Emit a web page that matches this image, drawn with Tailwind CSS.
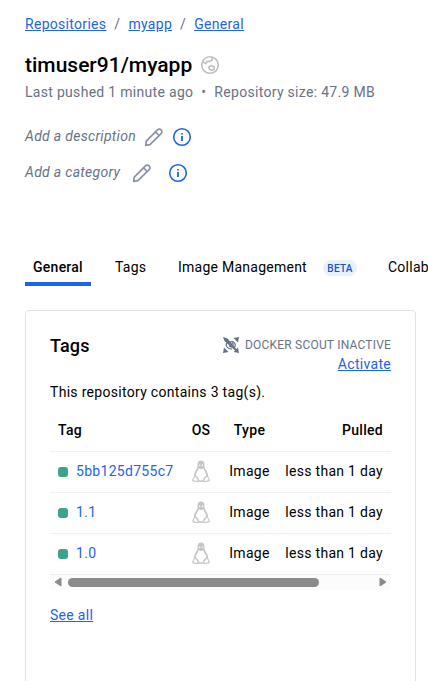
<!DOCTYPE html>
<html lang="en">
<head>
<meta charset="utf-8">
<title>timuser91/myapp</title>
<script src="https://cdn.jsdelivr.net/npm/@tailwindcss/browser@4"></script>
</head>
<body class="bg-white overflow-hidden h-[681px] font-[Roboto,sans-serif] text-[14px] leading-5 tracking-[0.3px] text-black">
<svg class="hidden">
  <symbol id="pencil" viewBox="0 0 20 20"><g fill="none" stroke="#8993a5" stroke-width="1.700" stroke-linejoin="round"><path d="M1.700 18.300l.6-4.200L13.400 2.900a2.650 2.650 0 0 1 3.750 3.750L5.900 17.700l-4.200.6z"/><path d="M11.500 4.800l3.700 3.700"/></g></symbol>
  <symbol id="info" viewBox="0 0 20 20"><circle cx="10" cy="10" r="8.300" fill="none" stroke="#1d63ed" stroke-width="1.600"/><path d="M9.100 5.900h1.800v1.700H9.100zM9.100 9h1.800v5H9.100z" fill="#1d63ed"/></symbol>
  <symbol id="tux" viewBox="0 0 18 23"><path d="M9 .5C6.700.5 5.500 2 5.600 4.200c.1 2.500-.2 3.800-1.700 6C2.500 12.200 1.900 14 2 16L.3 19.600c-.4 1.300.5 1.800 2 2 2 .2 3.200 1.300 4.300.2h4.800c1.100 1.100 2.300 0 4.300-.2 1.500-.2 2.400-.7 2-2L16 16c.1-2-.5-3.800-1.900-5.800-1.500-2.200-1.800-3.500-1.700-6C12.500 2 11.300.5 9 .5z" fill="#c6c6c6"/><path d="M6.800 8.200c-.6 2.200-3 4.300-3 7.600 1.800.8 3 2.500 3.200 4.400h4c.2-1.900 1.400-3.600 3.200-4.400 0-3.300-2.400-5.400-3-7.600L9 9.200z" fill="#fff"/><path d="M3 16.500l-1.700 3.300c.3 1 3 .8 4.100 1.400 1-1.300-.8-3.200-2.400-4.700zM15 16.500l1.700 3.300c-.3 1-3 .8-4.100 1.400-1-1.300.8-3.200 2.400-4.700z" fill="#fff"/><path d="M7 4.800h1.300v1.200H7zM9.800 4.800h1.300v1.200H9.800z" fill="#fff"/></symbol>
</svg>
<nav class="flex items-center gap-2 pl-[25px] pt-[14px] text-[#1d63ed]">
  <a class="underline">Repositories</a><span class="text-[#677285]">/</span><a class="underline">myapp</a><span class="text-[#677285]">/</span><a class="underline">General</a>
</nav>
<header class="pl-[25px] pt-[17px]">
  <div class="flex items-center gap-2 h-7">
    <h1 class="text-[21px] font-medium leading-7 tracking-[0px]">timuser91/myapp</h1>
    <svg class="size-5" viewBox="0 0 20 20" fill="none" stroke="#bfbfbf" stroke-width="1.600"><circle cx="10" cy="10" r="8.300"/><path d="M2.400 6.800l3.300 1.600 1.500-2h2.600L12.300 4.800l-.6-3M8.600 12.200l2.500-1.500 2.900.9.200 2.200-1.900 1.500-2.600-.7z"/></svg>
  </div>
  <div class="flex h-5 mt-[3px] text-[#677285]"><span>Last pushed 1 minute ago</span><span class="w-[21px] text-center">•</span><span>Repository size: 47.9 MB</span></div>
  <div class="flex items-center mt-[25px] h-5 text-[#677285]"><i class="pb-0.5">Add a description</i><svg class="size-5 ml-2"><use href="#pencil"/></svg><svg class="size-5 ml-2"><use href="#info"/></svg></div>
  <div class="flex items-center mt-4 h-5 text-[#677285]"><i class="pb-0.5">Add a category</i><svg class="size-5 ml-3"><use href="#pencil"/></svg><svg class="size-5 ml-4"><use href="#info"/></svg></div>
</header>
<div class="flex *:shrink-0 overflow-hidden ml-[25px] mt-[65px] h-[38px] whitespace-nowrap tracking-[0.25px]">
  <div class="w-[66px] border-b-4 border-[#1d63ed] text-center font-medium pt-[9px]">General</div>
  <div class="ml-[24px] w-[63px] pt-[9px]">Tags</div>
  <div class="w-[145px] pt-[9px]">Image Management</div>
  <div class="w-[34px] h-4 mt-[12px] rounded-full bg-[#e5f2fc] text-[#1354cc] text-[10px] leading-[17px] font-medium text-center">BETA</div>
  <div class="ml-[31px] pt-[9px]">Collaborators</div>
</div>
<main class="ml-[25px] mt-6 w-[391px] h-[390px] border border-[#e1e2e6] rounded-[4px] px-6 pt-[23px]">
  <div class="flex justify-between">
    <h2 class="text-[18px] font-medium leading-6 tracking-[0.15px]">Tags</h2>
    <div class="flex flex-col items-end">
      <div class="flex items-center h-5 gap-[6px] mt-px text-[12px] tracking-[0.2px] text-[#677285]"><svg class="size-4" viewBox="0 0 16 16"><path d="M0 0l4.500 1.500L15.700 14.700l-1 1L1.500 4zM16 0l-1 5.500L10.500 1zM0 16l1-5.500L5.500 15zM16 16l-5.500-1L15 10.500z" fill="#677285"/><path d="M4 6q-1.700 2 .2 4.200 2 2.200 4.700 1.700M6.500 5.300q3-1.500 4.700.4 2 2 .4 4.500M6.500 8q0 2 2.500 2M9 5.700q1.500.8 1.200 2.500" fill="none" stroke="#677285" stroke-width="1.200"/></svg><span>DOCKER SCOUT INACTIVE</span></div>
      <a class="-mt-px underline text-[#1d63ed]">Activate</a>
    </div>
  </div>
  <p class="mt-[8px] h-5">This repository contains 3 tag(s).</p>
  <table class="w-[341px] table-fixed mt-[7px] border-collapse">
    <colgroup><col class="w-[131px]"><col class="w-[40px]"><col class="w-[57px]"><col class="w-[113px]"></colgroup>
    <thead><tr class="h-[42px] border-b border-[#f0f0f1]"><th class="pl-2 text-left font-medium">Tag</th><th class="font-medium">OS</th><th class="font-medium">Type</th><th class="font-medium text-right pr-2">Pulled</th></tr></thead>
    <tbody class="[&_td]:pb-[2px]">
      <tr class="h-[41px] border-b border-[#f0f0f1]"><td class="pl-2"><div class="flex items-center gap-2 text-[#1d63ed]"><span class="size-[10px] mt-[2px] rounded-[3px] bg-[#3ca38c]"></span>5bb125d755c7</div></td><td><svg class="relative top-px w-[18px] h-[23px] mx-auto"><use href="#tux"/></svg></td><td class="text-center">Image</td><td class="text-right pr-2 whitespace-nowrap">less than 1 day</td></tr>
      <tr class="h-[41px] border-b border-[#f0f0f1]"><td class="pl-2"><div class="flex items-center gap-2 text-[#1d63ed]"><span class="size-[10px] mt-[2px] rounded-[3px] bg-[#3ca38c]"></span>1.1</div></td><td><svg class="relative top-px w-[18px] h-[23px] mx-auto"><use href="#tux"/></svg></td><td class="text-center">Image</td><td class="text-right pr-2 whitespace-nowrap">less than 1 day</td></tr>
      <tr class="h-[41px] border-b border-[#f0f0f1]"><td class="pl-2"><div class="flex items-center gap-2 text-[#1d63ed]"><span class="size-[10px] mt-[2px] rounded-[3px] bg-[#3ca38c]"></span>1.0</div></td><td><svg class="relative top-px w-[18px] h-[23px] mx-auto"><use href="#tux"/></svg></td><td class="text-center">Image</td><td class="text-right pr-2 whitespace-nowrap">less than 1 day</td></tr>
    </tbody>
  </table>
  <div class="flex items-center h-[15px] bg-[#fcfcfc] px-1">
    <svg class="w-2 h-[10px]" viewBox="0 0 8 10"><path d="M7 1L1 5l6 4z" fill="#8b8b8b" stroke="#8b8b8b" stroke-linejoin="round"/></svg>
    <div class="ml-[6px] w-[251px] h-[9px] rounded-full bg-[#8b8b8b]"></div>
    <svg class="ml-auto w-2 h-[10px]" viewBox="0 0 8 10"><path d="M1 1l6 4-6 4z" fill="#8b8b8b" stroke="#8b8b8b" stroke-linejoin="round"/></svg>
  </div>
  <a class="block mt-[15px] underline text-[#1d63ed]">See all</a>
</main>
</body>
</html>
